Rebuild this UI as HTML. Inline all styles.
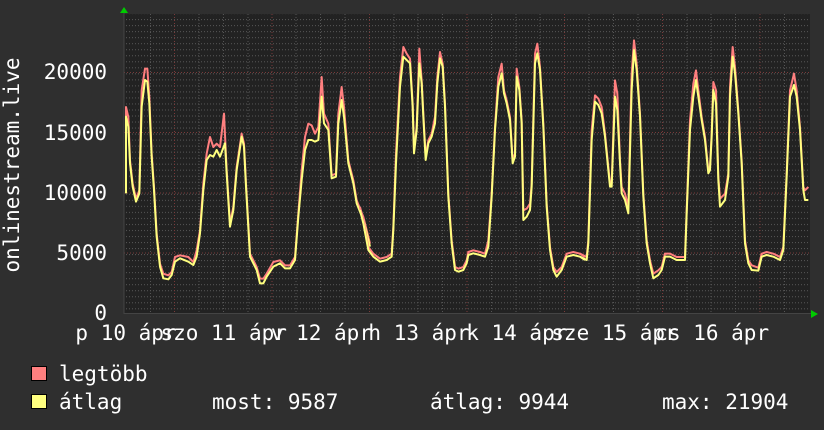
<!DOCTYPE html>
<html><head><meta charset="utf-8"><style>
html,body{margin:0;padding:0;background:#2f2f2f;width:824px;height:430px;overflow:hidden}
text{font-family:"DejaVu Sans Mono","Liberation Mono",monospace;font-size:21px;fill:#fff}
</style></head><body>
<svg width="824" height="430" xmlns="http://www.w3.org/2000/svg">
<defs>
<pattern id="hg" x="0" y="1" width="824" height="6.025" patternUnits="userSpaceOnUse">
<line x1="0" y1="0.5" x2="824" y2="0.5" stroke="#555" stroke-width="1" stroke-dasharray="1,2"/>
</pattern>
</defs>
<rect x="124" y="14" width="686" height="300" fill="#222"/>
<rect x="124" y="14" width="686" height="300" fill="url(#hg)"/>
<g stroke="#555" stroke-width="1" stroke-dasharray="1,2">
<line x1="150.5" y1="14" x2="150.5" y2="314"/><line x1="199" y1="14" x2="199" y2="314"/><line x1="223.5" y1="14" x2="223.5" y2="314"/><line x1="248" y1="14" x2="248" y2="314"/>
<line x1="296" y1="14" x2="296" y2="314"/><line x1="320.5" y1="14" x2="320.5" y2="314"/><line x1="345" y1="14" x2="345" y2="314"/>
<line x1="394" y1="14" x2="394" y2="314"/><line x1="418" y1="14" x2="418" y2="314"/><line x1="442.5" y1="14" x2="442.5" y2="314"/>
<line x1="491.5" y1="14" x2="491.5" y2="314"/><line x1="516" y1="14" x2="516" y2="314"/><line x1="540" y1="14" x2="540" y2="314"/>
<line x1="589" y1="14" x2="589" y2="314"/><line x1="613.5" y1="14" x2="613.5" y2="314"/><line x1="638" y1="14" x2="638" y2="314"/>
<line x1="687" y1="14" x2="687" y2="314"/><line x1="711" y1="14" x2="711" y2="314"/><line x1="735.5" y1="14" x2="735.5" y2="314"/>
<line x1="784.5" y1="14" x2="784.5" y2="314"/>
</g>
<g stroke="#7a3a3a" stroke-width="1" stroke-dasharray="1,2">
<line x1="174.5" y1="14" x2="174.5" y2="314"/><line x1="272" y1="14" x2="272" y2="314"/><line x1="369.5" y1="14" x2="369.5" y2="314"/><line x1="467" y1="14" x2="467" y2="314"/><line x1="564.5" y1="14" x2="564.5" y2="314"/><line x1="662.5" y1="14" x2="662.5" y2="314"/><line x1="760" y1="14" x2="760" y2="314"/>
<line x1="124" y1="72.5" x2="810" y2="72.5"/><line x1="124" y1="132.5" x2="810" y2="132.5"/><line x1="124" y1="193" x2="810" y2="193"/><line x1="124" y1="253" x2="810" y2="253"/>
</g>
<line x1="124" y1="12" x2="124" y2="314" stroke="#444" stroke-width="1"/>
<line x1="124" y1="313.5" x2="812" y2="313.5" stroke="#444" stroke-width="1"/>
<polygon points="120,13 128,13 124,7" fill="#0c0"/>
<polygon points="811,310 811,318 818,314" fill="#0c0"/>

<g fill="none" stroke-linejoin="round">
<g transform="translate(120,27) scale(0.33333)" stroke="#ff7f7f" stroke-width="6">
<polyline points="18,490 18,240 25,270 30,400 38,470 48,515 58,490 65,190 75,125 82,125 88,210 95,380 102,480 110,620 120,710 130,740 145,745 155,735 165,690 180,685 205,690 220,705 230,670 240,610 250,470 260,380 270,330 280,360 290,350 300,360 312,260 320,430 330,590 340,540 350,420 365,320 372,350 378,470 390,680 410,720 420,755 430,755 440,740 460,705 480,700 495,715 510,715 525,690 535,560 545,430 555,330 565,290 575,295 585,320 595,300 605,150 612,260 625,290 635,445 648,440 655,260 665,180 672,240 685,400 700,460 710,520 730,570 750,650"/>
</g>
<g transform="translate(120,30) scale(0.33333)" stroke="#ffff7f" stroke-width="6">
<polyline points="18,490 18,260 25,290 30,400 38,470 48,515 58,490 65,230 75,150 82,155 88,220 95,380 102,480 110,620 120,710 130,745 145,748 155,735 165,695 180,685 205,695 220,705 230,680 240,610 250,480 260,390 270,375 280,380 290,360 300,380 315,340 320,430 330,590 340,540 350,420 365,320 372,350 378,470 390,680 410,720 420,760 430,760 440,740 460,710 480,700 495,715 510,715 525,690 535,560 545,450 555,360 565,330 575,330 585,335 595,330 605,200 612,280 625,300 635,445 648,440 655,280 665,210 672,260 685,400 700,460 710,520 730,570 750,650"/>
</g>
<g transform="translate(360,27) scale(0.33333)" stroke="#ff7f7f" stroke-width="6">
<polyline points="0,540 10,580 25,660 40,680 60,695 80,690 95,680 100,600 108,380 120,150 130,60 140,80 150,95 158,230 162,370 170,300 178,65 185,160 190,260 197,390 205,340 215,320 225,270 232,150 240,75 248,110 255,230 265,500 275,640 285,720 295,725 310,720 320,700 325,675 340,670 360,675 375,680 385,640 395,500 405,300 415,150 425,110 432,190 440,220 450,270 458,400 465,380 470,125 478,180 485,280 490,550 500,545 510,530 515,470 525,80 532,50 540,120 550,290 560,530 570,660 580,720 590,735 605,720 620,680 640,675 660,680 675,690"/>
</g>
<g transform="translate(360,30) scale(0.33333)" stroke="#ffff7f" stroke-width="6">
<polyline points="0,540 10,580 25,660 40,680 60,695 80,690 95,680 100,600 108,400 120,170 130,80 140,90 150,100 158,230 162,370 170,300 178,100 185,160 190,260 197,390 205,340 215,320 225,280 232,160 240,85 248,110 255,230 265,500 275,640 285,720 295,725 310,720 320,700 325,675 340,670 360,675 375,680 385,650 395,500 405,300 415,170 425,130 432,190 440,220 450,270 458,400 465,380 470,140 478,180 485,280 490,570 500,560 510,540 515,470 525,100 532,70 540,120 550,290 560,530 570,660 580,720 590,740 605,720 620,680 640,675 660,680 675,690"/>
</g>
<g transform="translate(580,27) scale(0.33333)" stroke="#ff7f7f" stroke-width="6">
<polyline points="0,680 20,690 25,640 35,310 45,205 55,215 65,240 75,320 85,420 90,470 95,470 105,160 112,200 120,400 125,480 135,500 145,540 155,140 162,40 170,110 180,260 190,500 200,640 210,700 220,740 235,730 245,720 255,680 270,680 290,690 315,690 320,550 330,280 340,170 348,130 355,190 365,270 375,330 385,430 390,420 395,320 400,165 408,190 415,450 420,515 435,500 445,440 450,180 458,60 465,120 475,250 485,400 495,640 505,700 515,715 535,722 545,680 560,675 580,680 600,690 610,660 620,440 630,190 642,140 650,190 660,300 670,480 675,490 685,480"/>
</g>
<g transform="translate(580,30) scale(0.33333)" stroke="#ffff7f" stroke-width="6">
<polyline points="0,680 20,690 25,640 35,330 45,215 55,225 65,250 75,320 85,420 90,470 95,470 105,200 112,240 120,400 125,490 135,510 145,550 155,180 162,60 170,120 180,260 190,500 200,640 210,700 220,745 235,735 245,720 255,680 270,680 290,690 315,690 320,550 330,300 340,200 348,150 355,200 365,270 375,330 385,430 390,420 395,320 400,180 408,220 415,450 420,530 435,510 445,440 450,200 458,80 465,130 475,250 485,400 495,640 505,700 515,720 535,722 545,680 560,675 580,680 600,690 610,660 620,440 630,200 642,165 650,200 660,300 670,480 675,510 685,510"/>
</g>
</g>

<text x="107" y="79" text-anchor="end">20000</text>
<text x="107" y="140" text-anchor="end">15000</text>
<text x="107" y="200" text-anchor="end">10000</text>
<text x="107" y="260" text-anchor="end">5000</text>
<text x="107" y="320" text-anchor="end">0</text>
<text transform="translate(19,165) rotate(-90)" text-anchor="middle">onlinestream.live</text>

<g text-anchor="middle">
<text x="126" y="340">p 10 ápr</text>
<text x="223.7" y="340">szo 11 ápr</text>
<text x="321.4" y="340">v 12 ápr</text>
<text x="419" y="340">h 13 ápr</text>
<text x="516.8" y="340">k 14 ápr</text>
<text x="614.5" y="340">sze 15 ápr</text>
<text x="712.2" y="340">cs 16 ápr</text>
</g>

<rect x="31.5" y="366.5" width="15" height="14" fill="#ff7f7f" stroke="#000" stroke-width="1"/>
<rect x="31.5" y="394.5" width="15" height="14" fill="#ffff7f" stroke="#000" stroke-width="1"/>
<text x="59" y="381">legtöbb</text>
<text x="59" y="409">átlag</text>
<text x="212" y="409">most: 9587</text>
<text x="430" y="409">átlag: 9944</text>
<text x="662" y="409">max: 21904</text>
</svg>
</body></html>
